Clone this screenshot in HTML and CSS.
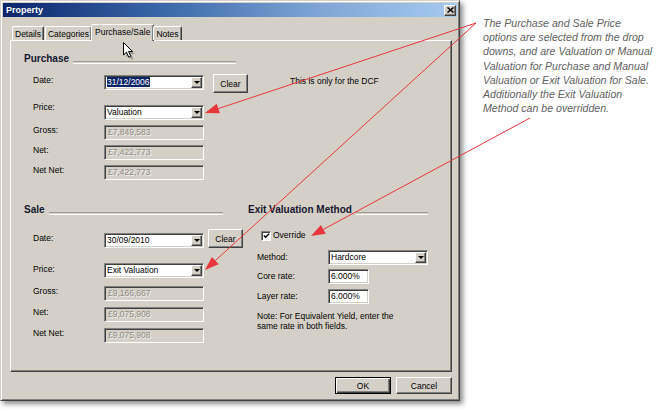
FILE: index.html
```html
<!DOCTYPE html>
<html>
<head>
<meta charset="utf-8">
<title>Property</title>
<link rel="stylesheet" href="styles.css">
</head>
<body>
<div class="stage">
  <div class="dialog">
    <div class="titlebar">
      <span class="title">Property</span>
      <span class="close"><svg width="7" height="6" viewBox="0 0 7 6"><path d="M0.5 0.5L6.5 5.5M6.5 0.5L0.5 5.5" stroke="#000" stroke-width="1.5"/></svg></span>
    </div>
    <div class="tabs">
      <div class="tab">Details</div>
      <div class="tab">Categories</div>
      <div class="tab active">Purchase/Sale</div>
      <div class="tab">Notes</div>
    </div>
    <div class="panel">
      <section class="group purchase">
        <div class="heading"><span>Purchase</span><i class="rule"></i></div>
        <div class="row row-date">
          <span class="lbl">Date:</span>
          <div class="field combo"><span class="val"><span class="selected">31/12/2006</span></span><span class="drop"></span></div>
          <button class="btn clear">Clear</button>
          <span class="hint">This is only for the DCF</span>
        </div>
        <div class="row row-price">
          <span class="lbl">Price:</span>
          <div class="field combo"><span class="val">Valuation</span><span class="drop"></span></div>
        </div>
        <div class="row row-amt">
          <span class="lbl">Gross:</span>
          <div class="field disabled"><span class="val">£7,849,583</span></div>
        </div>
        <div class="row row-amt">
          <span class="lbl">Net:</span>
          <div class="field disabled"><span class="val">£7,422,773</span></div>
        </div>
        <div class="row row-amt">
          <span class="lbl">Net Net:</span>
          <div class="field disabled"><span class="val">£7,422,773</span></div>
        </div>
      </section>
      <div class="lower">
        <section class="group sale">
          <div class="heading"><span>Sale</span><i class="rule"></i></div>
          <div class="row row-date">
            <span class="lbl">Date:</span>
            <div class="field combo"><span class="val">30/09/2010</span><span class="drop"></span></div>
            <button class="btn clear">Clear</button>
          </div>
          <div class="row row-price">
            <span class="lbl">Price:</span>
            <div class="field combo"><span class="val">Exit Valuation</span><span class="drop"></span></div>
          </div>
          <div class="row row-gross">
            <span class="lbl">Gross:</span>
            <div class="field disabled"><span class="val">£9,166,667</span></div>
          </div>
          <div class="row row-amt">
            <span class="lbl">Net:</span>
            <div class="field disabled"><span class="val">£9,075,908</span></div>
          </div>
          <div class="row row-amt">
            <span class="lbl">Net Net:</span>
            <div class="field disabled"><span class="val">£9,075,908</span></div>
          </div>
        </section>
        <section class="group exit">
          <div class="heading"><span>Exit Valuation Method</span><i class="rule"></i></div>
          <div class="row row-check">
            <span class="checkbox"><svg width="8" height="8" viewBox="0 0 8 8"><path d="M1 3.5L3 5.5L7 1.5" fill="none" stroke="#000" stroke-width="1.6"/></svg></span>
            <span class="check-label">Override</span>
          </div>
          <div class="row row-method">
            <span class="lbl">Method:</span>
            <div class="field combo"><span class="val">Hardcore</span><span class="drop"></span></div>
          </div>
          <div class="row row-core">
            <span class="lbl">Core rate:</span>
            <div class="field rate"><span class="val">6.000%</span></div>
          </div>
          <div class="row row-layer">
            <span class="lbl">Layer rate:</span>
            <div class="field rate"><span class="val">6.000%</span></div>
          </div>
          <p class="note">Note: For Equivalent Yield, enter the<br>same rate in both fields.</p>
        </section>
      </div>
    </div>
    <div class="buttons">
      <button class="btn default">OK</button>
      <button class="btn">Cancel</button>
    </div>
  </div>
  <div class="annotation">
    The Purchase and Sale Price<br>
    options are selected from the drop<br>
    downs, and are Valuation or Manual<br>
    Valuation for Purchase and Manual<br>
    Valuation or Exit Valuation for Sale.<br>
    Additionally the Exit Valuation<br>
    Method can be overridden.
  </div>
  <svg class="arrows" width="658" height="412" viewBox="0 0 658 412">
    <g stroke="#e8363c" stroke-width="1" fill="none">
      <line x1="476" y1="23" x2="218.3" y2="108.6"/>
      <line x1="476" y1="23" x2="215.3" y2="260.6"/>
      <line x1="530" y1="118" x2="323.3" y2="229.4"/>
    </g>
    <g fill="#e8363c">
      <polygon points="205,113 216.7,103.8 219.9,113.3"/>
      <polygon points="205,270 211.9,256.9 218.7,264.3"/>
      <polygon points="311,236 320.9,225.0 325.7,233.8"/>
    </g>
  </svg>
  <svg class="cursor" width="16" height="20" viewBox="0 0 16 20">
    <path d="M2.5 2.5L2.5 15L5.5 12.2L7.8 17.3L9.8 16.4L7.6 11.5L11.5 11.5Z" fill="rgba(0,0,0,0.25)" transform="translate(1.5,1.5)"/>
    <path d="M1.5 1.5L1.5 14L4.5 11.2L6.8 16.3L8.8 15.4L6.6 10.5L10.5 10.5Z" fill="#fff" stroke="#000" stroke-width="1"/>
  </svg>
</div>
</body>
</html>
```

FILE: styles.css
```css
html, body {
  margin: 0;
  padding: 0;
  background: #ffffff;
}

body {
  font-family: "Liberation Sans", Arial, sans-serif;
  font-size: 8.5px;
  color: #000;
}

.stage {
  position: relative;
  width: 658px;
  height: 412px;
  overflow: hidden;
  display: flex;
  align-items: flex-start;
}

.dialog {
  flex: none;
  box-sizing: border-box;
  width: 460px;
  height: 401px;
  padding: 2px;
  background: #d4d0c8;
  border: 1px solid;
  border-color: #d4d0c8 #404040 #404040 #d4d0c8;
  box-shadow: inset 1px 1px #ffffff, inset -1px -1px #808080, 3px 3px 5px rgba(0, 0, 0, 0.45);
  display: flex;
  flex-direction: column;
}

.titlebar {
  height: 14px;
  display: flex;
  align-items: center;
  justify-content: space-between;
  background: linear-gradient(to right, #0a246a 0%, #3a68a8 35%, #7fa6d6 70%, #a6caf0 100%);
}

.title {
  color: #ffffff;
  font-weight: bold;
  font-size: 9px;
  padding-left: 3px;
}

.close {
  box-sizing: border-box;
  width: 12px;
  height: 11px;
  margin-right: 1px;
  background: #d4d0c8;
  border: 1px solid;
  border-color: #ffffff #404040 #404040 #ffffff;
  box-shadow: inset -1px -1px #808080;
  display: flex;
  align-items: center;
  justify-content: center;
}

.close svg {
  display: block;
}

.tabs {
  display: flex;
  align-items: flex-end;
  height: 16px;
  margin-top: 7px;
  padding-left: 9px;
  position: relative;
  z-index: 1;
}

.tab {
  box-sizing: border-box;
  height: 14px;
  padding: 0 2px;
  margin-right: 1px;
  border: 1px solid;
  border-bottom: none;
  border-color: #ffffff #404040 transparent #ffffff;
  border-radius: 2px 2px 0 0;
  box-shadow: inset -1px 0 #808080;
  display: flex;
  align-items: center;
  white-space: nowrap;
}

.tab.active {
  height: 17px;
  margin: 0 -1px -1px -2px;
  padding: 0 3px 2px;
  background: #d4d0c8;
}

.panel {
  box-sizing: border-box;
  height: 332px;
  margin: 0 5px 0 7px;
  padding: 0 0 0 13px;
  border: 1px solid;
  border-color: #ffffff #404040 #404040 #ffffff;
  box-shadow: inset -1px -1px #808080;
}

.group {
  display: flex;
  flex-direction: column;
}

.heading {
  display: flex;
  align-items: flex-end;
  height: 12px;
  font-weight: bold;
  font-size: 10px;
  line-height: 12px;
  color: #15152e;
}

.heading span {
  white-space: nowrap;
}

.rule {
  flex: 1;
  height: 1px;
  margin: 0 0 1px 4px;
  border-top: 1px solid #a09c94;
  border-bottom: 1px solid #ffffff;
}

.purchase .heading {
  margin-top: 12px;
  width: 212px;
}

.sale {
  width: 224px;
}

.sale .heading {
  width: 199px;
  margin-top: 0;
}

.exit {
  width: 180px;
}

.exit .heading {
  width: 180px;
}

.exit .rule {
  margin-left: 4px;
}

.row {
  display: flex;
  align-items: flex-start;
}

.lbl {
  box-sizing: border-box;
  flex: none;
  width: 80px;
  padding-left: 9px;
  line-height: 11px;
  white-space: nowrap;
}

.field {
  box-sizing: border-box;
  flex: none;
  width: 100px;
  height: 15px;
  border: 1px solid;
  border-color: #808080 #ffffff #ffffff #808080;
  box-shadow: inset 1px 1px #404040, inset -1px -1px #d4d0c8;
  background: #ffffff;
  display: flex;
  align-items: center;
  padding: 1px;
}

.val {
  flex: 1;
  padding-left: 1px;
  white-space: nowrap;
  overflow: hidden;
  line-height: 11px;
}

.selected {
  background: #0a246a;
  color: #ffffff;
}

.drop {
  box-sizing: border-box;
  flex: none;
  width: 11px;
  height: 11px;
  background: #d4d0c8;
  border: 1px solid;
  border-color: #ffffff #404040 #404040 #ffffff;
  box-shadow: inset -1px -1px #808080;
  display: flex;
  align-items: center;
  justify-content: center;
}

.drop::after {
  content: "";
  width: 0;
  height: 0;
  border-left: 3px solid transparent;
  border-right: 3px solid transparent;
  border-top: 3px solid #000;
}

.disabled {
  background: #d4d0c8;
  color: #8e8b85;
}

.disabled .val {
  text-shadow: 1px 1px 0 #f2f0ec;
  padding-left: 2px;
}

.btn {
  box-sizing: border-box;
  font-family: inherit;
  font-size: 8.5px;
  color: #000;
  background: #d4d0c8;
  border: 1px solid;
  border-color: #ffffff #404040 #404040 #ffffff;
  box-shadow: inset -1px -1px #808080;
  padding: 0;
  margin: 0;
  display: flex;
  align-items: center;
  justify-content: center;
}

.clear {
  width: 35px;
  height: 19px;
}

/* Purchase rows */
.purchase .row-date {
  margin-top: 9px;
  height: 19px;
}

.purchase .row-date .lbl {
  margin-top: 1px;
}

.purchase .row-date .combo {
  margin-top: 1px;
}

.purchase .row-date .clear {
  margin-left: 9px;
}

.hint {
  margin: 1px 0 0 42px;
  line-height: 12px;
  white-space: nowrap;
}

.purchase .row-price {
  margin-top: 12px;
}

.purchase .row-price .lbl {
  margin-top: -3px;
}

.row-amt {
  margin-top: 5px;
}

/* Lower area */
.lower {
  display: flex;
  margin-top: 24px;
}

.sale .row-date {
  margin-top: 13px;
  height: 19px;
}

.sale .row-date .lbl {
  margin-top: 4px;
}

.sale .row-date .combo {
  margin-top: 4px;
}

.sale .row-date .clear {
  margin-left: 4px;
}

.sale .row-price {
  margin-top: 15px;
}

.sale .row-price .lbl {
  margin-top: 1px;
}

.sale .row-gross {
  margin-top: 8px;
}

.sale .row-amt {
  margin-top: 6px;
}

.exit .lbl {
  margin-top: 2px;
}

.row-check {
  margin-top: 13px;
  height: 13px;
  align-items: center;
}

.checkbox {
  box-sizing: border-box;
  width: 10px;
  height: 10px;
  margin-left: 13px;
  background: #ffffff;
  border: 1px solid;
  border-color: #808080 #ffffff #ffffff #808080;
  box-shadow: inset 1px 1px #404040;
  display: flex;
  align-items: center;
  justify-content: center;
}

.checkbox svg {
  display: block;
  margin: 1px 0 0 1px;
}

.check-label {
  margin-left: 2px;
  line-height: 13px;
}

.row-method {
  margin-top: 8px;
}

.row-core {
  margin-top: 4px;
}

.row-layer {
  margin-top: 5px;
}

.rate {
  width: 41px;
}

.note {
  margin: 7px 0 0 9px;
  line-height: 10px;
  white-space: nowrap;
}

.buttons {
  display: flex;
  justify-content: flex-end;
  gap: 5px;
  margin-top: 5px;
  padding-right: 5px;
}

.buttons .btn {
  width: 56px;
  height: 17px;
}

.buttons .default {
  border: 1px solid #000000;
  box-shadow: inset 1px 1px #ffffff, inset -1px -1px #404040, inset -2px -2px #808080;
}

.annotation {
  flex: none;
  margin: 16px 0 0 23px;
  font-style: italic;
  font-size: 10.6px;
  line-height: 14.2px;
  color: #5f5f5f;
  white-space: nowrap;
}

.arrows {
  position: absolute;
  left: 0;
  top: 0;
  pointer-events: none;
}

.cursor {
  position: absolute;
  left: 122px;
  top: 41px;
  pointer-events: none;
}
```
